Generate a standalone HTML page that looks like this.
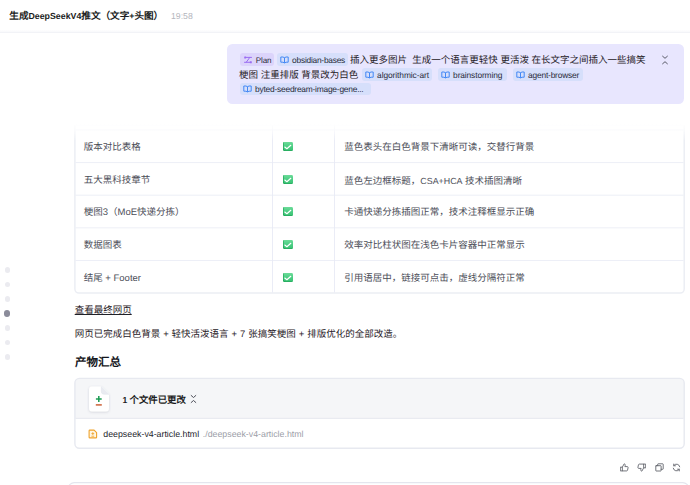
<!DOCTYPE html>
<html lang="zh-CN">
<head>
<meta charset="utf-8">
<title>chat</title>
<style>
html,body{margin:0;padding:0;}
body{width:690px;height:485px;overflow:hidden;background:#fff;position:relative;
  font-family:"Liberation Sans",sans-serif;color:#33353c;font-size:9.5px;line-height:14px;text-rendering:geometricPrecision;}
div{box-sizing:content-box;}
.abs{position:absolute;white-space:nowrap;height:14px;line-height:14px;}
#hdr{position:absolute;left:0;top:0;width:690px;height:32px;background:linear-gradient(#fff 29.500px,#f8f9fb 32px);border-bottom:1px solid #f2f3f7;}
#title{left:9.300px;top:8.600px;font-weight:bold;font-size:9.600px;color:#1b1c21;}
#title .l{font-size:8.800px;}
#time{left:171px;top:8.800px;font-size:8.700px;color:#b4b5bd;}
#bubble{position:absolute;left:227px;top:44.300px;width:457px;height:60px;border-radius:5.500px;background:#e8e6fe;}
.bt{color:#1f2026;}
.tag{position:absolute;height:12.500px;line-height:12.500px;border-radius:3px;font-size:8.100px;color:#2b2d3b;white-space:nowrap;}
.tag .ic{position:absolute;left:2.800px;top:2.400px;}
.tag span{position:absolute;left:14.800px;top:1.600px;}
.tp{background:#dcd4fb;}
.tb{background:#d6dffb;font-size:8.400px;}
.tb span{top:.7px;}
.c1{left:83.700px;color:#4b4d57;}
.c3{left:344.300px;color:#4b4d57;}
.ck{position:absolute;left:283.400px;width:9.600px;height:9.600px;border-radius:1.400px;background:linear-gradient(#6cdb98,#4fcf86 45%,#38c172);box-shadow:inset .7px -0.800px 0 #24a95c;}
.ck svg{position:absolute;left:0;top:0;}
.dot{position:absolute;width:5.400px;height:5.400px;border-radius:50%;background:#ebebf0;left:4.600px;}
</style>
</head>
<body>
<div id="hdr"></div>
<div class="abs" id="title">生成<span class="l">DeepSeekV4</span>推文（文字<span class="l">+</span>头图）</div>
<div class="abs" id="time">19:58</div>
<div id="bubble"></div>

<div class="tag tp" style="left:240px;top:53.3px;width:34px"><svg class="ic" style="left:4.400px;top:2.600px" width="8" height="8" viewBox="0 0 8 8"><path d="M1.400 1.400H5.800L2.200 6.300H6.600" fill="none" stroke="#9a6cf2" stroke-width="1" stroke-linejoin="round"/><rect x=".2" y=".4" width="2" height="2" rx=".5" fill="#9a6cf2"/><rect x="5.800" y="5.300" width="2" height="2" rx=".5" fill="#9a6cf2"/><path d="M5.800 1.400h1.700M.5 6.300h1.700" stroke="#9a6cf2" stroke-width="1" stroke-linecap="round"/></svg><span style="letter-spacing:-0.1px;left:15.7px">Plan</span></div>
<div class="tag tb" style="left:277.3px;top:53.3px;width:70.5px"><svg class="ic" width="9" height="8" viewBox="0 0 9 8"><path d="M4.5 1.7C3.7 1 2.3.8.8 1v5.200c1.500-.2 2.900 0 3.700.7.800-.7 2.200-.9 3.700-.7V1C6.700.8 5.300 1 4.500 1.700zM4.500 1.700v5.200" fill="none" stroke="#4388f5" stroke-width="1" stroke-linejoin="round"/></svg><span style="letter-spacing:-0.24px">obsidian-bases</span></div>
<div class="abs bt" style="left:350px;top:54px">插入更多图片&nbsp; 生成一个语言更轻快 更活泼 在长文字之间插入一些搞笑</div>
<div class="abs bt" style="left:239px;top:68.800px">梗图 注重排版 背景改为白色</div>
<div class="tag tb" style="left:362.3px;top:68.2px;width:70px"><svg class="ic" width="9" height="8" viewBox="0 0 9 8"><path d="M4.5 1.7C3.7 1 2.3.8.8 1v5.200c1.500-.2 2.900 0 3.700.7.800-.7 2.200-.9 3.700-.7V1C6.700.8 5.300 1 4.500 1.700zM4.500 1.700v5.200" fill="none" stroke="#4388f5" stroke-width="1" stroke-linejoin="round"/></svg><span style="letter-spacing:-0.08px">algorithmic-art</span></div>
<div class="tag tb" style="left:438.3px;top:68.2px;width:68.4px"><svg class="ic" width="9" height="8" viewBox="0 0 9 8"><path d="M4.5 1.7C3.7 1 2.3.8.8 1v5.200c1.500-.2 2.900 0 3.700.7.800-.7 2.200-.9 3.700-.7V1C6.700.8 5.300 1 4.500 1.700zM4.500 1.700v5.200" fill="none" stroke="#4388f5" stroke-width="1" stroke-linejoin="round"/></svg><span style="letter-spacing:-0.12px">brainstorming</span></div>
<div class="tag tb" style="left:513.3px;top:68.2px;width:69.4px"><svg class="ic" width="9" height="8" viewBox="0 0 9 8"><path d="M4.5 1.7C3.7 1 2.3.8.8 1v5.200c1.500-.2 2.900 0 3.700.7.800-.7 2.200-.9 3.700-.7V1C6.700.8 5.300 1 4.500 1.700zM4.500 1.700v5.200" fill="none" stroke="#4388f5" stroke-width="1" stroke-linejoin="round"/></svg><span style="letter-spacing:-0.2px">agent-browser</span></div>
<div class="tag tb" style="left:240.3px;top:82.7px;width:130.7px"><svg class="ic" width="9" height="8" viewBox="0 0 9 8"><path d="M4.5 1.7C3.7 1 2.3.8.8 1v5.200c1.500-.2 2.900 0 3.700.7.800-.7 2.200-.9 3.700-.7V1C6.700.8 5.300 1 4.500 1.700zM4.500 1.700v5.200" fill="none" stroke="#4388f5" stroke-width="1" stroke-linejoin="round"/></svg><span style="letter-spacing:-0.22px">byted-seedream-image-gene...</span></div>
<svg style="position:absolute;left:660.500px;top:54.600px" width="8" height="10" viewBox="0 0 8 10"><path d="M1.600 1.200L4 3.300 6.400 1.200M1.600 8.800L4 6.700 6.400 8.800" fill="none" stroke="#4a4c58" stroke-width=".9" stroke-linecap="round" stroke-linejoin="round"/></svg>
<svg style="position:absolute;left:0;top:0" width="690" height="485" viewBox="0 0 690 485" fill="none">
<path d="M74.900 125V289.100a4 4 0 0 0 4 4H680.200a4 4 0 0 0 4-4V125" stroke="#eceef4" stroke-width="1.500"/>
<path d="M75.600 125.300H683.500" stroke="#f6f7fb" stroke-width=".7"/>
<path d="M75.600 129.9H683.500" stroke="#e9ebf5" stroke-width=".8"/>
<path d="M75.600 162.55H683.500" stroke="#e9ebf5" stroke-width=".8"/>
<path d="M75.600 195.2H683.500" stroke="#e9ebf5" stroke-width=".8"/>
<path d="M75.600 227.85H683.500" stroke="#e9ebf5" stroke-width=".8"/>
<path d="M75.600 260.5H683.500" stroke="#e9ebf5" stroke-width=".8"/>
<path d="M272.5 125V292.400" stroke="#e6e8f4" stroke-width=".85"/>
<path d="M334.5 125V292.400" stroke="#e6e8f4" stroke-width=".85"/>
<path d="M74.900 418.400V382.900a4.500 4.500 0 0 1 4.500-4.500H679.700a4.500 4.500 0 0 1 4.500 4.500V418.400z" fill="#f5f6f8"/>
<rect x="74.900" y="378.400" width="609.300" height="69.800" rx="4.500" stroke="#e7e9f0" stroke-width="1.400"/>
<path d="M75.600 418.400H683.500" stroke="#e4e6ee" stroke-width=".9"/>
<path d="M68.300 490V488.600a6 6 0 0 1 6-6H682.700a6 6 0 0 1 6 6V490" stroke="#e4e6ee" stroke-width="1.200"/>
</svg>
<div style="position:absolute;left:70px;top:118px;width:620px;height:23px;background:linear-gradient(rgba(255,255,255,.92) 30%,rgba(255,255,255,.7) 55%,rgba(255,255,255,0));"></div>
<div class="abs c1" style="top:141px">版本对比表格</div>
<div class="ck" style="top:141.9px"><svg width="10" height="10" viewBox="0 0 10 10"><path d="M1.800 5l2.100 1.700L7.800 3.300" fill="none" stroke="#fff" stroke-width="1.150" stroke-linecap="round" stroke-linejoin="round"/></svg></div>
<div class="abs c3" style="top:141px">蓝色表头在白色背景下清晰可读，交替行背景</div>
<div class="abs c1" style="top:174px">五大黑科技章节</div>
<div class="ck" style="top:174.9px"><svg width="10" height="10" viewBox="0 0 10 10"><path d="M1.800 5l2.100 1.700L7.800 3.300" fill="none" stroke="#fff" stroke-width="1.150" stroke-linecap="round" stroke-linejoin="round"/></svg></div>
<div class="abs c3" style="top:174px">蓝色左边框标题，<span style="font-size:8.900px">CSA+HCA</span> 技术插图清晰</div>
<div class="abs c1" style="top:206px">梗图3（MoE快递分拣）</div>
<div class="ck" style="top:206.9px"><svg width="10" height="10" viewBox="0 0 10 10"><path d="M1.800 5l2.100 1.700L7.800 3.300" fill="none" stroke="#fff" stroke-width="1.150" stroke-linecap="round" stroke-linejoin="round"/></svg></div>
<div class="abs c3" style="top:206px">卡通快递分拣插图正常，技术注释框显示正确</div>
<div class="abs c1" style="top:239px">数据图表</div>
<div class="ck" style="top:239.9px"><svg width="10" height="10" viewBox="0 0 10 10"><path d="M1.800 5l2.100 1.700L7.800 3.300" fill="none" stroke="#fff" stroke-width="1.150" stroke-linecap="round" stroke-linejoin="round"/></svg></div>
<div class="abs c3" style="top:239px">效率对比柱状图在浅色卡片容器中正常显示</div>
<div class="abs c1" style="top:272px">结尾 + Footer</div>
<div class="ck" style="top:272.9px"><svg width="10" height="10" viewBox="0 0 10 10"><path d="M1.800 5l2.100 1.700L7.800 3.300" fill="none" stroke="#fff" stroke-width="1.150" stroke-linecap="round" stroke-linejoin="round"/></svg></div>
<div class="abs c3" style="top:272px">引用语居中，链接可点击，虚线分隔符正常</div>
<div class="abs" style="left:74.700px;top:303.800px;color:#1f2026;text-decoration:underline;text-underline-offset:1px;">查看最终网页</div>
<div class="abs" style="left:74.700px;top:327.500px;color:#1f2026;word-spacing:.3px;">网页已完成白色背景 + 轻快活泼语言 + 7 张搞笑梗图 + 排版优化的全部改造。</div>
<div class="abs" style="left:75px;top:355px;color:#15161b;font-weight:bold;font-size:11.500px;height:16px;line-height:16px;">产物汇总</div>
<svg style="position:absolute;left:85.500px;top:384px" width="27" height="31" viewBox="0 0 27 31">
<defs><filter id="sh" x="-30%" y="-30%" width="160%" height="160%"><feDropShadow dx="0" dy=".8" stdDeviation="1.100" flood-color="#50566e" flood-opacity=".22"/></filter></defs>
<path d="M6 2.600h9.300l7.700 7.700V24.400a3 3 0 0 1-3 3H6a3 3 0 0 1-3-3V5.600a3 3 0 0 1 3-3z" fill="#fff" filter="url(#sh)"/>
<path d="M15.300 2.600v4.900a2.800 2.800 0 0 0 2.800 2.800h4.900z" fill="#e9ebf1"/>
<path d="M15.300 2.600v4.900a2.800 2.800 0 0 0 2.800 2.800h4.900" fill="none" stroke="#dfe2ea" stroke-width=".5"/>
<path d="M9.900 15h5.800M12.800 12.100v5.800" stroke="#1b9c53" stroke-width="1.500" fill="none"/>
<path d="M9.800 20.900h6" stroke="#cf6a44" stroke-width="1.600" fill="none"/>
</svg>
<div class="abs" style="left:122.400px;top:392.600px;color:#1b1c21;font-weight:bold;font-size:9.400px;"><span style="font-size:8.600px">1 </span>个文件已更改</div>
<svg style="position:absolute;left:190.200px;top:393.500px" width="7" height="10" viewBox="0 0 7 10"><path d="M1.200 1.500L3.500 3.500 5.800 1.500M1.200 8.500L3.500 6.500 5.800 8.500" fill="none" stroke="#3c3e49" stroke-width=".9" stroke-linecap="round" stroke-linejoin="round"/></svg>
<svg style="position:absolute;left:88.300px;top:428.500px" width="10" height="10" viewBox="0 0 10 10"><path d="M1.800 1.100H6.100L8.600 3.600V8.200a.7.700 0 0 1-.7.700H1.800a.7.700 0 0 1-.7-.7V1.800a.7.700 0 0 1 .7-.7z" fill="#fff7e6" stroke="#efa32c" stroke-width="1.100" stroke-linejoin="round"/><path d="M3.400 4.600h2.800M4.800 3.200v2.800M3.400 7.200h2.800" stroke="#efa32c" stroke-width=".85" fill="none"/></svg>
<div class="abs" style="left:103.300px;top:427.200px;color:#24252c;font-size:8.800px;">deepseek-v4-article.html</div>
<div class="abs" style="left:202.800px;top:427.200px;color:#9c9ea8;font-size:8.800px;">./deepseek-v4-article.html</div>
<svg style="position:absolute;left:619.7px;top:462.9px" width="9" height="9" viewBox="0 0 10 10"><path d="M.8 4.600h1.800v4.200H.8zM2.600 4.600l2-3.600c.9 0 1.400.7 1.200 1.500l-.4 1.500h2.700c.6 0 1 .5.900 1.100l-.6 2.800c-.1.500-.5.900-1 .9H2.600" fill="none" stroke="#5c5e66" stroke-width=".95" stroke-linejoin="round" stroke-linecap="round"/></svg>
<svg style="position:absolute;left:637.0px;top:463.2px" width="9" height="9" viewBox="0 0 10 10"><path d="M9.200 5.400H7.400V1.200h1.800zM7.400 5.400l-2 3.600c-.9 0-1.400-.7-1.200-1.500l.4-1.500H1.900c-.6 0-1-.5-.9-1.100l.6-2.800c.1-.5.500-.9 1-.9h4.800" fill="none" stroke="#5c5e66" stroke-width=".95" stroke-linejoin="round" stroke-linecap="round"/></svg>
<svg style="position:absolute;left:655.0px;top:463.2px" width="9" height="9" viewBox="0 0 10 10"><rect x=".9" y="3" width="5.900" height="5.900" rx=".4" fill="none" stroke="#5c5e66" stroke-width=".95" stroke-linejoin="round" stroke-linecap="round"/><path d="M3 3V1.400c0-.3.200-.5.500-.5h5.100c.3 0 .5.200.5.500v5.100c0 .3-.2.500-.5.500H6.800" fill="none" stroke="#5c5e66" stroke-width=".95" stroke-linejoin="round" stroke-linecap="round"/></svg>
<svg style="position:absolute;left:672.0px;top:463.0px" width="9" height="9" viewBox="0 0 10 10"><path d="M8.600 4.200A3.700 3.700 0 0 0 2 2.800M1.400 5.800A3.700 3.700 0 0 0 8 7.200M1.900 1.200v1.900h1.900M8.100 8.800V6.900H6.200" fill="none" stroke="#5c5e66" stroke-width=".95" stroke-linejoin="round" stroke-linecap="round"/></svg>
<div class="dot" style="top:267.3px"></div>
<div class="dot" style="top:281.8px"></div>
<div class="dot" style="top:296.3px"></div>
<div class="dot" style="top:310.3px;left:4.100px;width:6.400px;height:6.400px;background:#8b8c9a"></div>
<div class="dot" style="top:325.3px"></div>
<div class="dot" style="top:339.8px"></div>
<div class="dot" style="top:354.3px"></div>
</body>
</html>
